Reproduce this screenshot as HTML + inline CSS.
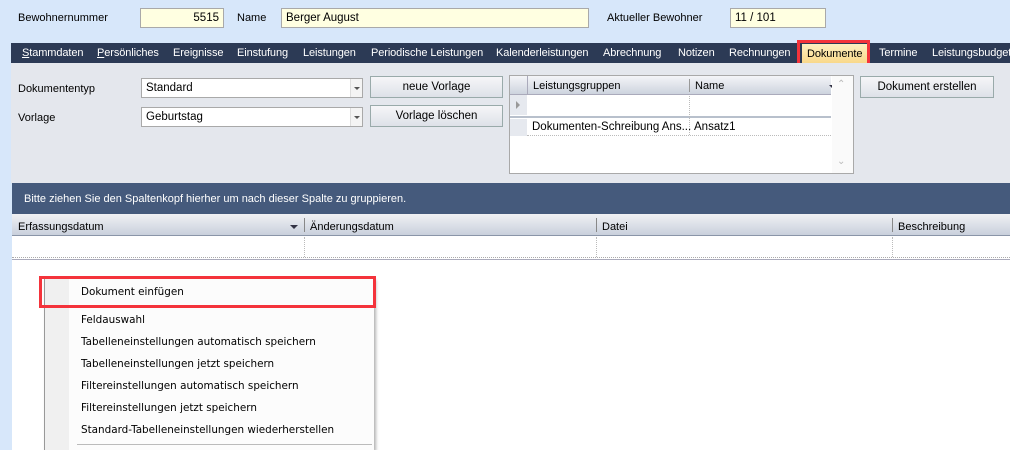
<!DOCTYPE html>
<html><head><meta charset="utf-8"><style>
*{margin:0;padding:0;box-sizing:border-box}
body{width:1010px;height:450px;overflow:hidden;background:#d7e7fa;font-family:"Liberation Sans",sans-serif;font-size:11px;color:#000;position:relative}
.a{position:absolute;white-space:nowrap}
.inp{position:absolute;background:#ffffe1;border:1px solid #a9a9a9;height:20px;line-height:18px;padding:0 4px;font-size:11.5px}
.nav{position:absolute;left:11px;top:43px;width:999px;height:20px;background:#2c3a55}
.nav span{position:absolute;top:4px;color:#fff;font-size:11px;letter-spacing:-0.1px}
.panel{position:absolute;left:11px;top:63px;width:999px;height:120px;background:#e4e7ed}
.combo{position:absolute;background:#fff;border:1px solid #a9a9a9;height:20px;line-height:18px;padding-left:4px;font-size:11.5px}
.combo i{position:absolute;right:0;top:0;width:12px;height:18px;border-left:1px solid #ddd;background:#f4f4f4}
.combo i:after{content:"";position:absolute;left:3px;top:8px;border:3px solid transparent;border-top:3px solid #555;border-bottom:0}
.btn{position:absolute;height:22px;line-height:20px;text-align:center;border:1px solid #9aa;background:linear-gradient(#f6f6f8,#dde1e8);font-size:11.5px}
.menu{position:absolute;left:44px;top:278px;width:330px;height:172px;background:#fcfcfc;border-left:1px solid #999;box-shadow:2px 2px 3px rgba(0,0,0,.3)}
.menu div{position:absolute;left:36px;font-family:"DejaVu Sans","Liberation Sans",sans-serif;font-size:10.4px;color:#000}
</style></head><body>
<div class="a" style="left:18px;top:12px">Bewohnernummer</div>
<div class="inp" style="left:140px;top:8px;width:84px;text-align:right">5515</div>
<div class="a" style="left:237px;top:12px">Name</div>
<div class="inp" style="left:281px;top:8px;width:308px">Berger August</div>
<div class="a" style="left:607px;top:12px">Aktueller Bewohner</div>
<div class="inp" style="left:730px;top:8px;width:96px">11 / 101</div>

<div class="nav">
<span style="left:11px"><u>S</u>tammdaten</span>
<span style="left:86px"><u>P</u>ersönliches</span>
<span style="left:162px">Ereignisse</span>
<span style="left:226px">Einstufung</span>
<span style="left:292px">Leistungen</span>
<span style="left:360px">Periodische Leistungen</span>
<span style="left:485px">Kalenderleistungen</span>
<span style="left:592px">Abrechnung</span>
<span style="left:667px">Notizen</span>
<span style="left:718px">Rechnungen</span>
<span style="left:791px;top:1px;height:19px;width:67px;background:linear-gradient(#fdf0c0,#f9d88a);color:#000;padding:4px 0 0 5px">Dokumente</span>
<span style="left:868px">Termine</span>
<span style="left:921px">Leistungsbudget</span>
</div>
<div class="a" style="left:797px;top:40px;width:73px;height:26px;border:3px solid #f4333b"></div>

<div class="panel"></div>
<div class="a" style="left:18px;top:83px">Dokumententyp</div>
<div class="combo" style="left:141px;top:78px;width:222px">Standard<i></i></div>
<div class="a" style="left:18px;top:112px">Vorlage</div>
<div class="combo" style="left:141px;top:107px;width:222px">Geburtstag<i></i></div>
<div class="btn" style="left:370px;top:76px;width:133px">neue Vorlage</div>
<div class="btn" style="left:370px;top:105px;width:133px">Vorlage löschen</div>
<div class="btn" style="left:860px;top:76px;width:134px">Dokument erstellen</div>

<div class="a" style="left:509px;top:75px;width:345px;height:99px;background:#fff;border:1px solid #a9a9a9">
 <div class="a" style="left:0;top:0;width:321px;height:19px;background:linear-gradient(#f4f5f8,#cdd3de);border-bottom:1px solid #aab"></div>
 <div class="a" style="left:17px;top:0;height:19px;border-left:1px solid #aab"></div>
 <div class="a" style="left:23px;top:4px">Leistungsgruppen</div>
 <div class="a" style="left:179px;top:3px;height:13px;border-left:1px solid #999"></div>
 <div class="a" style="left:185px;top:4px">Name</div>
 <div class="a" style="left:319px;top:9px;width:0;height:0;border-left:4px solid transparent;border-right:4px solid transparent;border-top:4px solid #334"></div>
 <div class="a" style="left:0;top:19px;width:17px;height:20px;background:#e6e9ef"></div>
 <div class="a" style="left:6px;top:25px;width:0;height:0;border-top:4px solid transparent;border-bottom:4px solid transparent;border-left:4px solid #999"></div>
 <div class="a" style="left:0;top:40px;width:321px;border-top:2px solid #b8c0cc"></div>
 <div class="a" style="left:0;top:43px;width:17px;height:17px;background:#e6e9ef"></div>
 <div class="a" style="left:22px;top:45px;font-size:11.5px">Dokumenten-Schreibung Ans...</div>
 <div class="a" style="left:184px;top:45px;font-size:11.5px">Ansatz1</div>
 <div class="a" style="left:179px;top:20px;height:39px;border-left:1px dotted #bbb"></div>
 <div class="a" style="left:17px;top:59px;width:304px;border-top:1px dotted #bbb"></div>
 <div class="a" style="left:322px;top:0;width:21px;height:97px;background:#fafafa"></div>
 <div class="a" style="left:327px;top:3px;color:#bbb;font-size:10px">&#8963;</div>
 <div class="a" style="left:327px;top:80px;color:#bbb;font-size:10px">&#8964;</div>
</div>

<div class="a" style="left:12px;top:183px;width:998px;height:31px;background:#455a7c"></div>
<div class="a" style="left:24px;top:193px;color:#fff;font-size:11px">Bitte ziehen Sie den Spaltenkopf hierher um nach dieser Spalte zu gruppieren.</div>
<div class="a" style="left:12px;top:214px;width:998px;height:22px;background:linear-gradient(#f0f1f4,#c9d0dc);border-bottom:1px solid #8a95a8"></div>
<div class="a" style="left:18px;top:221px">Erfassungsdatum</div>
<div class="a" style="left:290px;top:225px;width:0;height:0;border-left:4px solid transparent;border-right:4px solid transparent;border-top:4px solid #334"></div>
<div class="a" style="left:304px;top:218px;height:14px;border-left:1px solid #888"></div>
<div class="a" style="left:310px;top:221px">Änderungsdatum</div>
<div class="a" style="left:596px;top:218px;height:14px;border-left:1px solid #888"></div>
<div class="a" style="left:602px;top:221px">Datei</div>
<div class="a" style="left:892px;top:218px;height:14px;border-left:1px solid #888"></div>
<div class="a" style="left:898px;top:221px">Beschreibung</div>
<div class="a" style="left:12px;top:236px;width:998px;height:214px;background:#fff"></div>
<div class="a" style="left:304px;top:237px;height:20px;border-left:1px dotted #bbb"></div>
<div class="a" style="left:596px;top:237px;height:20px;border-left:1px dotted #bbb"></div>
<div class="a" style="left:892px;top:237px;height:20px;border-left:1px dotted #bbb"></div>
<div class="a" style="left:12px;top:257px;width:998px;border-top:1px dotted #aaa"></div>
<div class="a" style="left:12px;top:259px;width:998px;border-top:1px solid #aab"></div>

<div class="menu">
<div style="left:0;top:0;width:24px;height:172px;background:#f0f0f0"></div>
<div style="top:8px">Dokument einfügen</div>
<div style="top:36px">Feldauswahl</div>
<div style="top:58px">Tabelleneinstellungen automatisch speichern</div>
<div style="top:80px">Tabelleneinstellungen jetzt speichern</div>
<div style="top:102px">Filtereinstellungen automatisch speichern</div>
<div style="top:124px">Filtereinstellungen jetzt speichern</div>
<div style="top:146px">Standard-Tabelleneinstellungen wiederherstellen</div>
<div style="left:32px;top:166px;width:295px;border-top:1px solid #bbb"></div>
</div>
<div class="a" style="left:39px;top:276px;width:337px;height:32px;border:3px solid #f4333b"></div>
</body></html>
